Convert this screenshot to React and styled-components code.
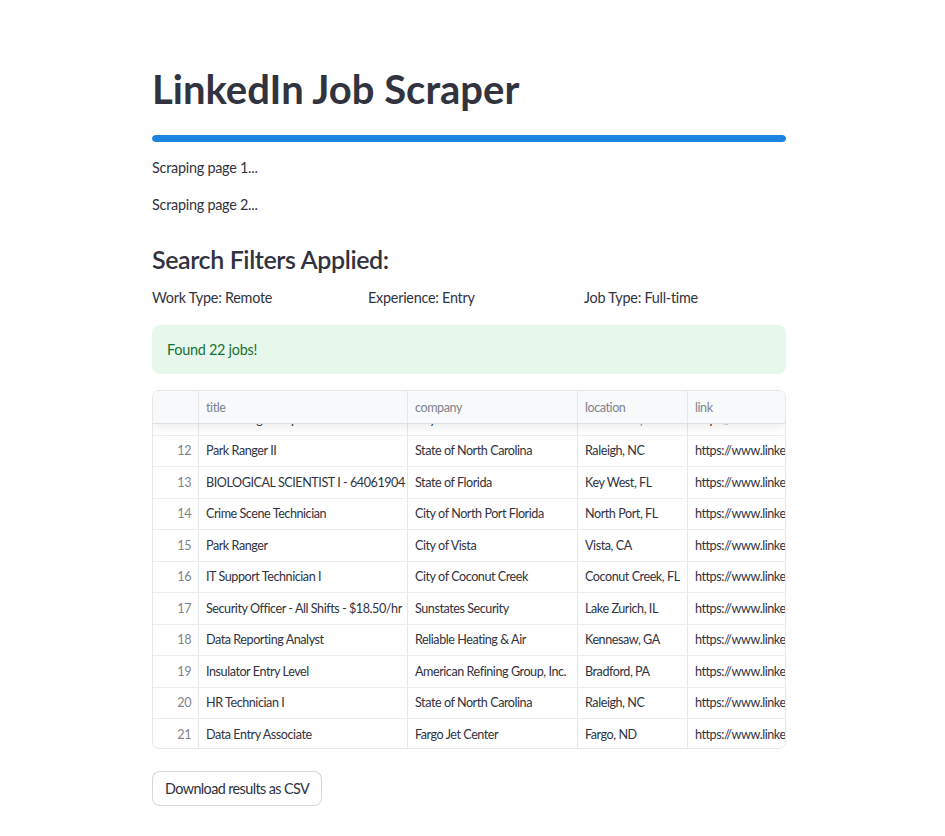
import React from "react";
import styled, { createGlobalStyle } from "styled-components";

const GlobalStyle = createGlobalStyle`
  html, body { margin: 0; padding: 0; background: #ffffff; }
  body {
    font-family: "Lato", "Noto Sans", sans-serif;
    color: rgb(49, 51, 63);
    -webkit-font-smoothing: antialiased;
  }
`;

const Main = styled.main`
  width: 634px;
  margin: 0 0 0 152px;
  padding: 65px 0 30px;
  display: flex;
  flex-direction: column;
`;

const Title = styled.h1`
  margin: 0;
  font-size: 40px;
  line-height: 48px;
  font-weight: 700;
  letter-spacing: 0px;
  color: rgb(49, 51, 63);
`;

const ProgressTrack = styled.div`
  margin-top: 22px;
  height: 7px;
  border-radius: 4px;
  background: rgb(240, 242, 246);
  overflow: hidden;
`;

const ProgressFill = styled.div`
  height: 100%;
  border-radius: 4px;
  background: rgb(28, 131, 225);
`;

const Paragraph = styled.p`
  margin: ${(p) => p.$mt || 0}px 0 0;
  font-size: 14.4px;
  line-height: 24px;
  letter-spacing: -0.25px;
`;

const Subheader = styled.h3`
  margin: 26px 0 0;
  font-size: 25px;
  line-height: 32px;
  font-weight: 600;
  letter-spacing: -0.4px;
`;

const FilterRow = styled.div`
  margin-top: 11px;
  display: grid;
  grid-template-columns: repeat(3, 1fr);
  column-gap: 14px;
  font-size: 14.4px;
  line-height: 24px;
  letter-spacing: -0.25px;
`;

const SuccessBox = styled.div`
  margin-top: 15px;
  height: 49px;
  box-sizing: border-box;
  padding: 0 15px;
  display: flex;
  align-items: center;
  border-radius: 8px;
  background: rgb(232, 247, 236);
  color: rgb(23, 114, 51);
  font-size: 14.4px;
  letter-spacing: -0.25px;
`;

const Table = styled.div`
  margin-top: 16px;
  height: 359px;
  box-sizing: border-box;
  border: 1px solid rgb(230, 231, 234);
  border-radius: 7px;
  overflow: hidden;
  display: flex;
  flex-direction: column;
  font-size: 12.6px;
  letter-spacing: -0.45px;
`;

const cols = "45px 209px 170px 110px 160px";

const HeaderRow = styled.div`
  position: relative;
  z-index: 1;
  display: grid;
  grid-template-columns: ${cols};
  height: 32px;
  flex: none;
  background: rgb(248, 249, 251);
  border-bottom: 1px solid rgb(222, 224, 228);
  box-shadow: 0 3px 10px rgba(0, 0, 0, 0.08);
`;

const HeaderCell = styled.div`
  display: flex;
  align-items: center;
  padding: 0 7px;
  color: rgb(128, 131, 141);
  border-left: ${(p) => (p.$first ? "none" : "1px solid rgb(230, 231, 234)")};
  white-space: nowrap;
  overflow: hidden;
`;

const Body = styled.div`
  flex: 1;
  overflow: hidden;
`;

const Row = styled.div`
  display: grid;
  grid-template-columns: ${cols};
  height: 31.5px;
  box-sizing: border-box;
  border-bottom: 1px solid rgb(236, 237, 240);
  margin-top: ${(p) => p.$offset || 0}px;
`;

const Cell = styled.div`
  display: flex;
  align-items: center;
  justify-content: ${(p) => (p.$index ? "flex-end" : "flex-start")};
  padding: 0 7px;
  color: ${(p) => (p.$index ? "rgb(128, 131, 141)" : "rgb(49, 51, 63)")};
  border-left: ${(p) => (p.$index ? "none" : "1px solid rgb(230, 231, 234)")};
  white-space: nowrap;
  overflow: hidden;
`;

const DownloadButton = styled.button`
  margin-top: 22px;
  align-self: flex-start;
  height: 35px;
  padding: 0 12px;
  border: 1px solid rgba(49, 51, 63, 0.2);
  border-radius: 8px;
  background: #ffffff;
  color: rgb(49, 51, 63);
  font-family: inherit;
  font-size: 14.4px;
  letter-spacing: -0.6px;
  cursor: pointer;
`;

const LINK = "https://www.linkedin.com/jobs/view/";

const rows = [
  [11, "Youth Program Specialist", "City of Gainesville", "Gainesville, FL"],
  [12, "Park Ranger II", "State of North Carolina", "Raleigh, NC"],
  [13, "BIOLOGICAL SCIENTIST I - 64061904", "State of Florida", "Key West, FL"],
  [14, "Crime Scene Technician", "City of North Port Florida", "North Port, FL"],
  [15, "Park Ranger", "City of Vista", "Vista, CA"],
  [16, "IT Support Technician I", "City of Coconut Creek", "Coconut Creek, FL"],
  [17, "Security Officer - All Shifts - $18.50/hr", "Sunstates Security", "Lake Zurich, IL"],
  [18, "Data Reporting Analyst", "Reliable Heating & Air", "Kennesaw, GA"],
  [19, "Insulator Entry Level", "American Refining Group, Inc.", "Bradford, PA"],
  [20, "HR Technician I", "State of North Carolina", "Raleigh, NC"],
  [21, "Data Entry Associate", "Fargo Jet Center", "Fargo, ND"],
];

export default function App() {
  return (
    <>
      <GlobalStyle />
      <Main>
        <Title>LinkedIn Job Scraper</Title>
        <ProgressTrack>
          <ProgressFill style={{ width: "100%" }} />
        </ProgressTrack>
        <Paragraph $mt={14}>Scraping page 1...</Paragraph>
        <Paragraph $mt={13}>Scraping page 2...</Paragraph>
        <Subheader>Search Filters Applied:</Subheader>
        <FilterRow>
          <div>Work Type: Remote</div>
          <div>Experience: Entry</div>
          <div>Job Type: Full-time</div>
        </FilterRow>
        <SuccessBox>Found 22 jobs!</SuccessBox>
        <Table>
          <HeaderRow>
            <HeaderCell $first />
            <HeaderCell>title</HeaderCell>
            <HeaderCell>company</HeaderCell>
            <HeaderCell>location</HeaderCell>
            <HeaderCell>link</HeaderCell>
          </HeaderRow>
          <Body>
            {rows.map(([i, t, c, l], k) => (
              <Row key={i} $offset={k === 0 ? -20 : 0}>
                <Cell $index>{i}</Cell>
                <Cell>{t}</Cell>
                <Cell>{c}</Cell>
                <Cell>{l}</Cell>
                <Cell>{LINK + (4000000000 + i * 1731)}</Cell>
              </Row>
            ))}
          </Body>
        </Table>
        <DownloadButton>Download results as CSV</DownloadButton>
      </Main>
    </>
  );
}
